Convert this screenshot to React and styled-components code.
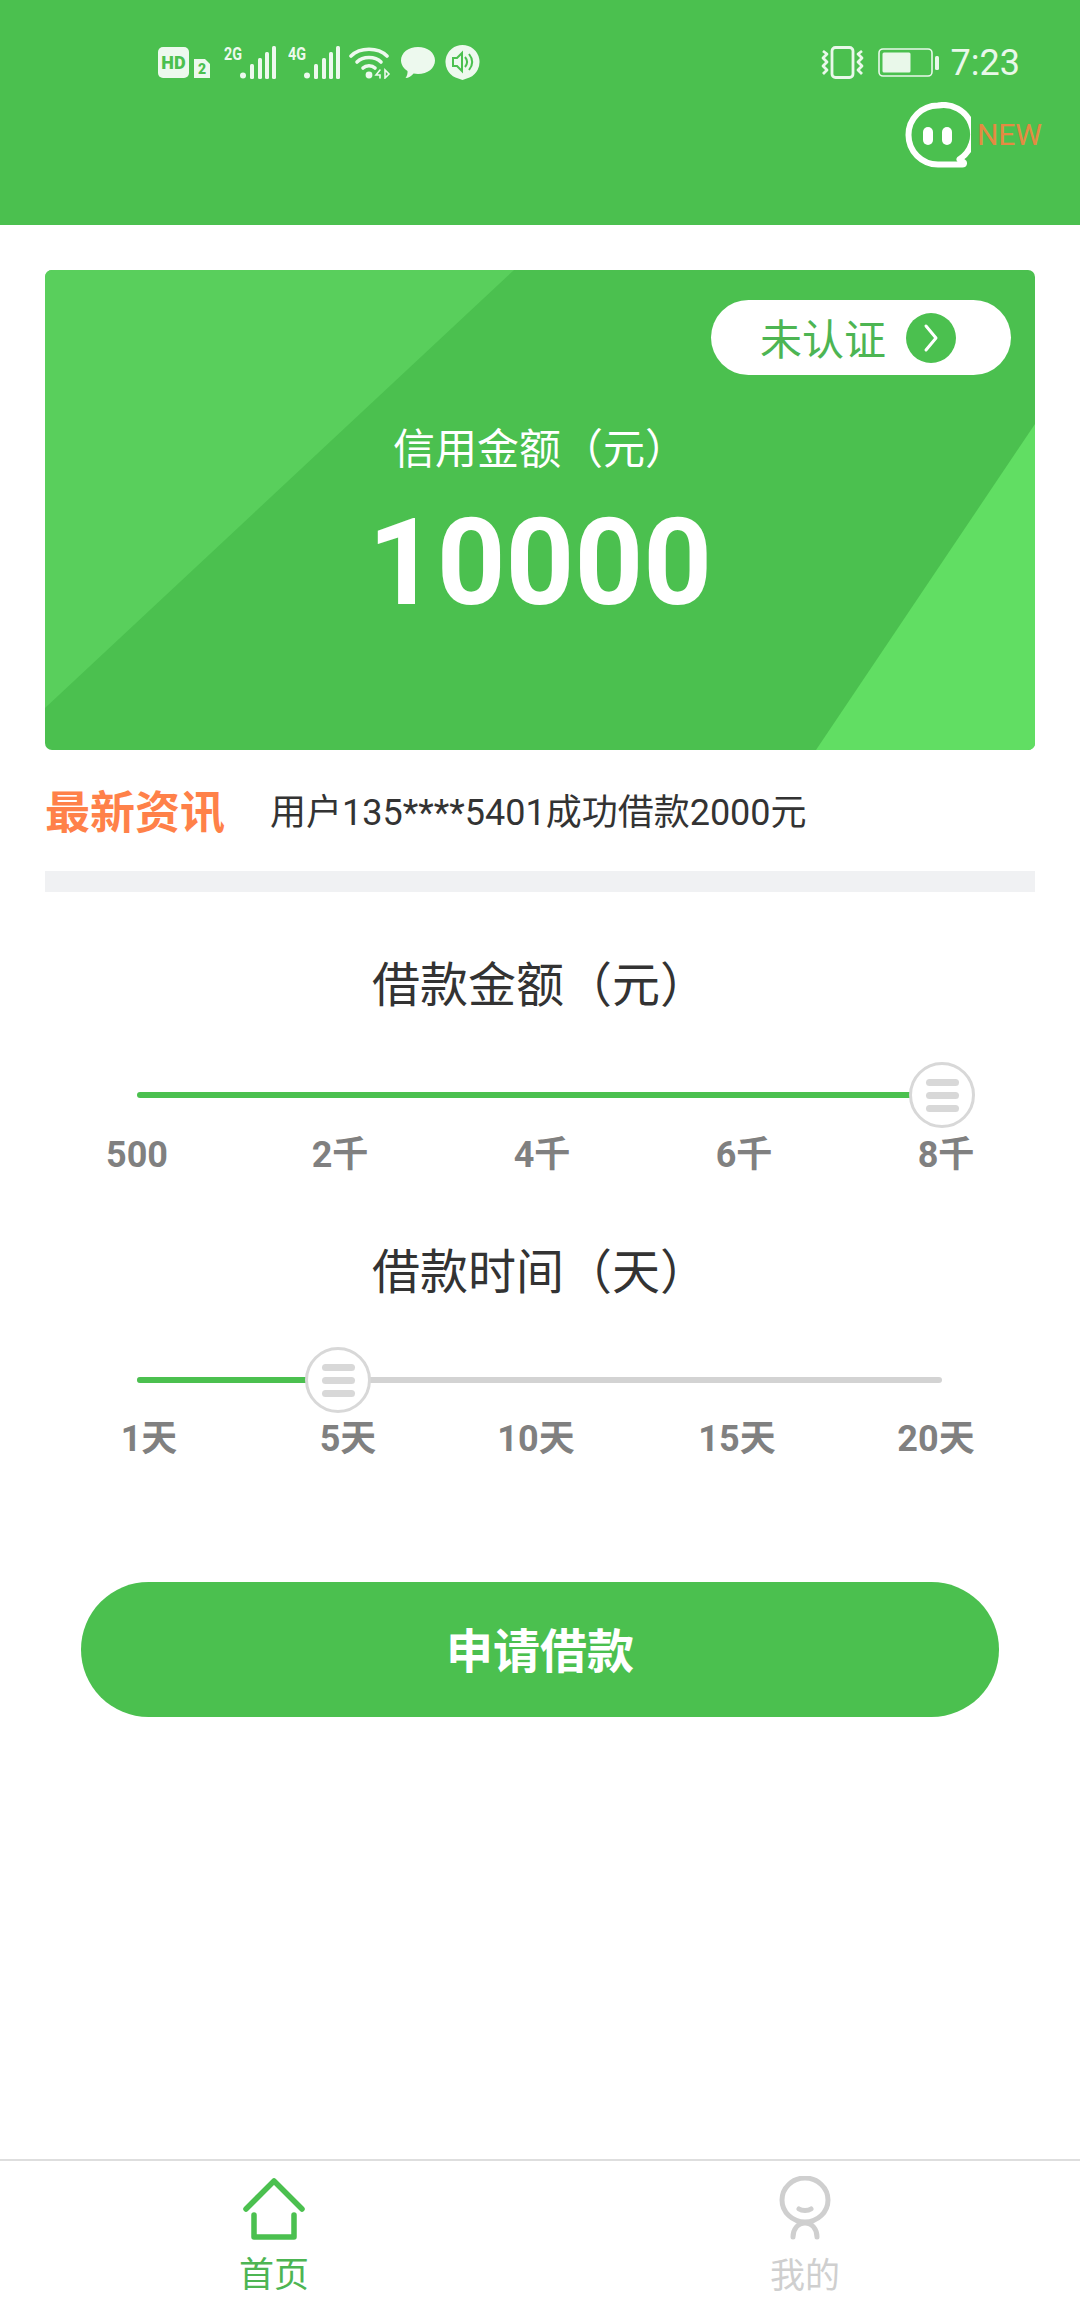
import React from "react";
import styled, { createGlobalStyle } from "styled-components";

const GREEN = "#4bc04f";
const TEXT_GREEN = "#4db553";
const FONT = `Roboto, "Noto Sans CJK SC", sans-serif`;

const Global = createGlobalStyle`
  html, body { margin: 0; padding: 0; background: #fff; }
  body { font-family: ${FONT}; text-spacing-trim: space-all; }
  * { box-sizing: border-box; }
`;

const Page = styled.div`
  width: 1080px;
  height: 2310px;
  display: flex;
  flex-direction: column;
  background: #fff;
  overflow: hidden;
`;

const Header = styled.header`
  height: 225px;
  background: ${GREEN};
  display: flex;
  flex-direction: column;
  padding: 45px 60px 0 158px;
`;

const StatusBar = styled.div`
  height: 35px;
  display: flex;
  align-items: center;
  color: #edf9ee;
`;

const StatusLeft = styled.div`
  display: flex;
  align-items: center;
`;

const StatusRight = styled.div`
  margin-left: auto;
  display: flex;
  align-items: center;
`;

const Icon = styled.svg`
  display: block;
  flex: none;
  margin-left: ${(p) => p.$ml || 0}px;
`;

const HdBadge = styled.span`
  flex: none;
  width: 31px;
  height: 31px;
  border-radius: 5px;
  background: #edf9ee;
  color: ${GREEN};
  font: 900 18px/31px Roboto, sans-serif;
  text-align: center;
`;

const SimBadge = styled.span`
  flex: none;
  width: 16px;
  height: 19px;
  margin: 12px 0 0 5px;
  background: #edf9ee;
  clip-path: polygon(0 0, 11px 0, 16px 5px, 16px 19px, 0 19px);
  color: ${GREEN};
  font: 900 14px/21px Roboto, sans-serif;
  text-align: center;
`;

const Clock = styled.span`
  font: 400 36px/36px Roboto, sans-serif;
  margin-left: 12px;
  color: #e9f8ea;
`;

const ServiceRow = styled.div`
  margin-top: 22px;
  margin-right: -22px;
  display: flex;
  justify-content: flex-end;
  align-items: center;
`;

const NewTag = styled.span`
  font: 400 30px/30px Roboto, sans-serif;
  color: #e58a42;
  margin-left: 6px;
`;

const Main = styled.main`
  flex: 1;
  display: flex;
  flex-direction: column;
  padding: 45px 45px 0;
`;

const Card = styled.section`
  position: relative;
  height: 480px;
  border-radius: 7px;
  background: ${GREEN};
  overflow: hidden;
  display: flex;
  flex-direction: column;
  align-items: center;
  padding: 30px 24px 0;
  color: #fff;
  &::before {
    content: "";
    position: absolute;
    inset: 0;
    background: #59cf5c;
    clip-path: polygon(0 0, 469px 0, 0 438px);
  }
  &::after {
    content: "";
    position: absolute;
    inset: 0;
    background: #61de63;
    clip-path: polygon(990px 154px, 990px 480px, 771px 480px);
  }
  & > * { position: relative; z-index: 1; }
`;

const StatusPill = styled.div`
  align-self: flex-end;
  width: 300px;
  height: 75px;
  border-radius: 38px;
  background: #fff;
  display: flex;
  align-items: center;
  padding-left: 49px;
  color: ${TEXT_GREEN};
  font-size: 42px;
  line-height: 65px;
`;

const PillText = styled.span`
  padding-top: 5px;
`;

const ArrowDot = styled.span`
  width: 50px;
  height: 50px;
  border-radius: 50%;
  background: ${GREEN};
  margin-left: 20px;
  display: flex;
  align-items: center;
  justify-content: center;
`;

const CardLabel = styled.div`
  margin-top: 47px;
  font-size: 42px;
  line-height: 56px;
`;

const Amount = styled.div`
  margin-top: 25px;
  font: 700 120px/120px Roboto, sans-serif;
`;

const NewsRow = styled.div`
  margin-top: 33px;
  height: 60px;
  display: flex;
  align-items: center;
`;

const NewsTag = styled.span`
  font-size: 45px;
  font-weight: 700;
  color: #ff8149;
  line-height: 58px;
  width: 225px;
  padding-top: 1px;
`;

const NewsText = styled.span`
  font-size: 36px;
  line-height: 60px;
  color: #333;
`;

const Band = styled.div`
  margin-top: 28px;
  height: 21px;
  background: #f0f1f3;
`;

const SliderTitle = styled.h2`
  margin: ${(p) => p.$mt}px 0 0;
  font-size: 48px;
  font-weight: 400;
  line-height: 60px;
  color: #333;
  text-align: center;
`;

const Slider = styled.div`
  position: relative;
  margin: ${(p) => p.$mt}px 93px 0 92px;
  height: 66px;
  display: flex;
  align-items: center;
`;

const Track = styled.div`
  width: 100%;
  height: 6px;
  border-radius: 3px;
  background: #d3d3d3;
  overflow: hidden;
`;

const Fill = styled.div`
  height: 100%;
  background: ${GREEN};
`;

const Thumb = styled.div`
  position: absolute;
  top: 0;
  width: 66px;
  height: 66px;
  margin-left: -33px;
  border: 3px solid #d8d8d8;
  border-radius: 50%;
  background: #fff;
  display: flex;
  flex-direction: column;
  align-items: center;
  justify-content: center;
  gap: 6px;
`;

const Grip = styled.span`
  width: 33px;
  height: 7px;
  border-radius: 3.5px;
  background: #d8d8d8;
`;

const Ticks = styled.div`
  margin: ${(p) => p.$mt}px 0 0 ${(p) => p.$left}px;
  display: grid;
  grid-template-columns: ${(p) => p.$cols};
  justify-items: center;
  font-size: 36px;
  font-weight: 700;
  line-height: 40px;
  color: #808080;
`;

const ApplyButton = styled.button`
  margin: 123px 36px 0;
  height: 135px;
  border: 0;
  padding: 0 0 5px;
  border-radius: 68px;
  background: ${GREEN};
  color: #fff;
  font-family: ${FONT};
  font-size: 47px;
  font-weight: 700;
`;

const TabBar = styled.nav`
  height: 151px;
  border-top: 2px solid #dedede;
  display: grid;
  grid-template-columns: 1fr 1fr;
`;

const Tab = styled.div`
  display: flex;
  flex-direction: column;
  align-items: center;
  padding-top: ${(p) => p.$top}px;
  margin-left: ${(p) => p.$ml}px;
  color: ${(p) => (p.$active ? TEXT_GREEN : "#cfcfcf")};
`;

const TabText = styled.span`
  margin-top: ${(p) => p.$mt}px;
  font-size: 35px;
  line-height: 46px;
`;

const Signal = ({ label, ml }) => (
  <Icon $ml={ml} width="52" height="33" viewBox="0 0 52 33">
    <text x="0" y="14" fontFamily="Roboto" fontWeight="700" fontSize="18" textLength="18" lengthAdjust="spacingAndGlyphs" fill="#edf9ee">{label}</text>
    <circle cx="19" cy="29.500" r="3" fill="#edf9ee" />
    <rect x="26" y="18" width="4" height="15" rx="1.500" fill="#edf9ee" />
    <rect x="34" y="12" width="4" height="21" rx="1.500" fill="#edf9ee" />
    <rect x="41" y="6" width="4" height="27" rx="1.500" fill="#edf9ee" />
    <rect x="48" y="0" width="4" height="33" rx="1.500" fill="#edf9ee" />
  </Icon>
);

const Wifi = () => (
  <Icon $ml={9} width="42" height="33" viewBox="0 0 42 33" fill="none" stroke="#edf9ee" strokeWidth="3.600" strokeLinecap="round">
    <path d="M2 10C11 1 29 1 38 10" />
    <path d="M8 16C14 10 26 10 32 16" />
    <path d="M14 22c3-3 9-3 12 0" />
    <circle cx="20" cy="29" r="3.400" fill="#edf9ee" stroke="none" />
    <path d="M31 24l-4 5h4v3M36 24v8l4-4z" strokeWidth="1.600" />
  </Icon>
);

const Bubble = () => (
  <Icon $ml={9} width="36" height="33" viewBox="0 0 36 33">
    <path d="M18 1c9.600 0 17 5.800 17 13.500S27.600 28 18 28c-1.500 0-3-.2-4.400-.5C11.500 30 8.500 32 5.500 32c1.500-2 2.300-4.500 2-7C3.800 22.500 1 18.800 1 14.500 1 6.800 8.400 1 18 1z" fill="#edf9ee" />
  </Icon>
);

const SpeakerBubble = () => (
  <Icon $ml={9} width="35" height="35" viewBox="0 0 35 35">
    <path d="M17.500 0a17 17 0 0 1 7 32.500L17.500 35l-7-2.500A17 17 0 0 1 17.500 0z" fill="#edf9ee" />
    <path d="M8 13h4l5-5v18l-5-5H8z" fill="none" stroke={GREEN} strokeWidth="2" />
    <path d="M20 12c2.500 3 2.500 7 0 10M24 9c4 5 4 11 0 16" fill="none" stroke={GREEN} strokeWidth="2" />
  </Icon>
);

const Vibrate = () => (
  <Icon width="43" height="33" viewBox="0 0 43 33" fill="none" stroke="#e9f8ea" strokeWidth="2.800" strokeLinejoin="round">
    <rect x="11" y="1.500" width="21" height="30" rx="3.500" />
    <path d="M2 5l4 3-4 4 4 4-4 4 4 4-4 4" />
    <path d="M41 5l-4 3 4 4-4 4 4 4-4 4 4 4" />
  </Icon>
);

const Battery = () => (
  <Icon $ml={14} width="61" height="29" viewBox="0 0 61 29">
    <rect x="1" y="1" width="53" height="27" rx="4" fill="none" stroke="#e9f8ea" strokeWidth="1.600" />
    <rect x="4.500" y="4.500" width="28" height="20" rx="1.500" fill="#e9f8ea" />
    <rect x="57" y="8" width="4" height="14" rx="1.500" fill="#e9f8ea" />
  </Icon>
);

const ServiceIcon = () => (
  <Icon width="66" height="66" viewBox="0 0 66 66">
    <path d="M33 3.500a29.500 29.500 0 1 0 0 59h24.500c1.700 0 2-1.800.8-2.600l-3.800-2.600A29.500 29.500 0 0 0 33 3.500z" fill="none" stroke="#fff" strokeWidth="6" strokeLinejoin="round" />
    <rect x="18" y="25" width="10" height="18" rx="5" fill="#fff" />
    <rect x="37" y="25" width="10" height="18" rx="5" fill="#fff" />
  </Icon>
);

const HomeIcon = () => (
  <Icon width="62" height="62" viewBox="0 0 62 62" fill="none" stroke={GREEN} strokeWidth="5.500" strokeLinecap="round" strokeLinejoin="round">
    <path d="M3 31L31 3l28 28" />
    <path d="M11 37v22h40V37" />
  </Icon>
);

const PersonIcon = () => (
  <Icon width="52" height="64" viewBox="0 0 52 64" fill="none" stroke="#cfcfcf" strokeWidth="5" strokeLinecap="round">
    <ellipse cx="26" cy="24" rx="23" ry="22" />
    <path d="M20 33c3 2 9 2 12 0" />
    <path d="M14 61c0-8 5-14 12-14s12 6 12 14" />
  </Icon>
);

const Grips = () => (
  <>
    <Grip />
    <Grip />
    <Grip />
  </>
);

export default function App() {
  return (
    <Page>
      <Global />
      <Header>
        <StatusBar>
          <StatusLeft>
            <HdBadge>HD</HdBadge>
            <SimBadge>2</SimBadge>
            <Signal label="2G" ml={14} />
            <Signal label="4G" ml={12} />
            <Wifi />
            <Bubble />
            <SpeakerBubble />
          </StatusLeft>
          <StatusRight>
            <Vibrate />
            <Battery />
            <Clock>7:23</Clock>
          </StatusRight>
        </StatusBar>
        <ServiceRow>
          <ServiceIcon />
          <NewTag>NEW</NewTag>
        </ServiceRow>
      </Header>
      <Main>
        <Card>
          <StatusPill>
            <PillText>未认证</PillText>
            <ArrowDot>
              <svg width="20" height="30" viewBox="0 0 20 30" fill="none" stroke="#fff" strokeWidth="3" strokeLinecap="round" strokeLinejoin="round">
                <path d="M5 3l10 12L5 27" />
              </svg>
            </ArrowDot>
          </StatusPill>
          <CardLabel>信用金额（元）</CardLabel>
          <Amount>10000</Amount>
        </Card>
        <NewsRow>
          <NewsTag>最新资讯</NewsTag>
          <NewsText>用户135****5401成功借款2000元</NewsText>
        </NewsRow>
        <Band />
        <SliderTitle $mt={64}>借款金额（元）</SliderTitle>
        <Slider $mt={46}>
          <Track>
            <Fill style={{ width: "100%" }} />
          </Track>
          <Thumb style={{ left: "100%" }}>
            <Grips />
          </Thumb>
        </Slider>
        <Ticks $mt={7} $left={-10} $cols="204px 202px 202px 202px 202px">
          <span>500</span>
          <span>2千</span>
          <span>4千</span>
          <span>6千</span>
          <span>8千</span>
        </Ticks>
        <SliderTitle $mt={68}>借款时间（天）</SliderTitle>
        <Slider $mt={44}>
          <Track>
            <Fill style={{ width: "25%" }} />
          </Track>
          <Thumb style={{ left: "25%" }}>
            <Grips />
          </Thumb>
        </Slider>
        <Ticks $mt={6} $left={0} $cols="208px 190px 186px 216px 182px">
          <span>1天</span>
          <span>5天</span>
          <span>10天</span>
          <span>15天</span>
          <span>20天</span>
        </Ticks>
        <ApplyButton>申请借款</ApplyButton>
      </Main>
      <TabBar>
        <Tab $active $top={17} $ml={8}>
          <HomeIcon />
          <TabText $mt={13}>首页</TabText>
        </Tab>
        <Tab $top={15} $ml={-10}>
          <PersonIcon />
          <TabText $mt={14}>我的</TabText>
        </Tab>
      </TabBar>
    </Page>
  );
}
